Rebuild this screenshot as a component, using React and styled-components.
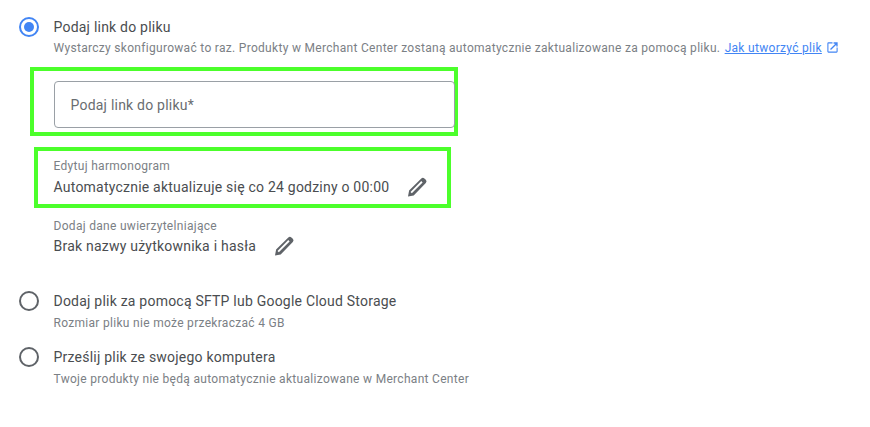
import styled, { createGlobalStyle } from "styled-components";

const GlobalStyle = createGlobalStyle`
  html, body {
    margin: 0;
    padding: 0;
    background: #fff;
    font-family: Roboto, "Liberation Sans", sans-serif;
    color: #4a4d50;
  }
`;

const Page = styled.div`
  width: 870px;
  height: 427px;
  padding: 17px 0 0 19px;
  box-sizing: border-box;
  overflow: hidden;
`;

const Option = styled.div`
  display: grid;
  grid-template-columns: 20px 1fr;
  column-gap: 14.5px;
  margin-bottom: ${(p) => p.$gap || 0}px;
`;

const Radio = styled.span`
  width: 20px;
  height: 20px;
  box-sizing: border-box;
  border-radius: 50%;
  border: 2px solid ${(p) => (p.$checked ? "#4285f4" : "#5f6368")};
  display: flex;
  align-items: center;
  justify-content: center;

  &::after {
    content: "";
    display: ${(p) => (p.$checked ? "block" : "none")};
    width: 10px;
    height: 10px;
    border-radius: 50%;
    background: #4285f4;
  }
`;

const Label = styled.div`
  font-size: 14px;
  line-height: 20px;
  letter-spacing: 0.22px;
  color: #4a4d50;
`;

const Hint = styled.div`
  font-size: 12px;
  line-height: 16px;
  margin-top: ${(p) => p.$top || 4}px;
  letter-spacing: 0.3px;
  color: #7b8085;
  white-space: nowrap;
`;

const HelpLink = styled.a`
  color: #4285f4;
  text-decoration: underline;
  margin-left: 1px;
`;

const LinkIcon = styled.svg`
  width: 13px;
  height: 13px;
  margin-left: 4px;
  vertical-align: -2px;
  fill: #4285f4;
`;

const Highlight = styled.div`
  border: 4px solid #4cff2b;
  box-sizing: border-box;
  margin-left: ${(p) => p.$left}px;
  width: ${(p) => p.$width}px;
  height: ${(p) => p.$height}px;
  margin-top: ${(p) => p.$top}px;
  padding-left: ${(p) => p.$inset}px;
`;

const InputBox = styled.div`
  width: 401px;
  height: 47px;
  margin-top: 10px;
  box-sizing: border-box;
  border: 1px solid #9aa0a6;
  border-radius: 4px;
  padding-left: 16px;
  display: flex;
  align-items: center;
  font-size: 14px;
  letter-spacing: 0.22px;
  color: #696d71;
`;

const Field = styled.div`
  padding-top: ${(p) => p.$top || 0}px;
`;

const FieldCaption = styled.div`
  font-size: 12px;
  line-height: 14px;
  letter-spacing: 0.3px;
  color: #7b8085;
`;

const FieldValue = styled.div`
  display: flex;
  align-items: center;
  gap: 16px;
  margin-top: ${(p) => p.$top}px;
  font-size: 14px;
  line-height: 24px;
  letter-spacing: 0.22px;
  color: #4a4d50;
`;

const Pencil = styled.svg`
  width: 24px;
  height: 24px;
  fill: #5f6368;
  flex: none;
`;

const Plain = styled.div`
  margin-left: 34.5px;
  margin-top: ${(p) => p.$top}px;
  margin-bottom: ${(p) => p.$bottom}px;
`;

const EditIcon = () => (
  <Pencil viewBox="0 0 24 24">
    <path d="M3 21.5l1.1-5.9L16.3 3.4a2.2 2.2 0 0 1 3.1 0l1.4 1.4a2.2 2.2 0 0 1 0 3.1L8.7 20.4z M5.5 16.900l1.300 1.300L17.600 7.400 16.300 6.100z" fillRule="evenodd" />
  </Pencil>
);

export default function App() {
  return (
    <>
      <GlobalStyle />
      <Page>
        <Option>
          <Radio $checked />
          <div>
            <Label>Podaj link do pliku</Label>
            <Hint $top={3}>
              Wystarczy skonfigurować to raz. Produkty w Merchant Center zostaną automatycznie zaktualizowane za pomocą pliku.{" "}
              <HelpLink href="#">Jak utworzyć plik</HelpLink>
              <LinkIcon viewBox="0 0 24 24">
                <path d="M19.5 19.5h-15v-15H12V2.5H4.5a2 2 0 0 0-2 2v15a2 2 0 0 0 2 2h15a2 2 0 0 0 2-2V12h-2v7.5zM14 2.500v2.500h3.300l-9.800 9.800 1.700 1.700L19 6.700V10h2.500V2.500h-7.500z" />
              </LinkIcon>
            </Hint>
          </div>
        </Option>

        <Highlight $left={11} $width={428} $height={69} $top={11} $inset={19.5}>
          <InputBox>Podaj link do pliku*</InputBox>
        </Highlight>

        <Highlight $left={15} $width={417} $height={61} $top={11} $inset={15.5}>
          <Field $top={8}>
            <FieldCaption>Edytuj harmonogram</FieldCaption>
            <FieldValue $top={2}>
              Automatycznie aktualizuje się co 24 godziny o 00:00
              <EditIcon />
            </FieldValue>
          </Field>
        </Highlight>

        <Plain $top={11} $bottom={33}>
          <FieldCaption>Dodaj dane uwierzytelniające</FieldCaption>
          <FieldValue $top={1}>
            Brak nazwy użytkownika i hasła
            <EditIcon />
          </FieldValue>
        </Plain>

        <Option $gap={16}>
          <Radio />
          <div>
            <Label>Dodaj plik za pomocą SFTP lub Google Cloud Storage</Label>
            <Hint>Rozmiar pliku nie może przekraczać 4 GB</Hint>
          </div>
        </Option>

        <Option>
          <Radio />
          <div>
            <Label>Prześlij plik ze swojego komputera</Label>
            <Hint>Twoje produkty nie będą automatycznie aktualizowane w Merchant Center</Hint>
          </div>
        </Option>
      </Page>
    </>
  );
}
